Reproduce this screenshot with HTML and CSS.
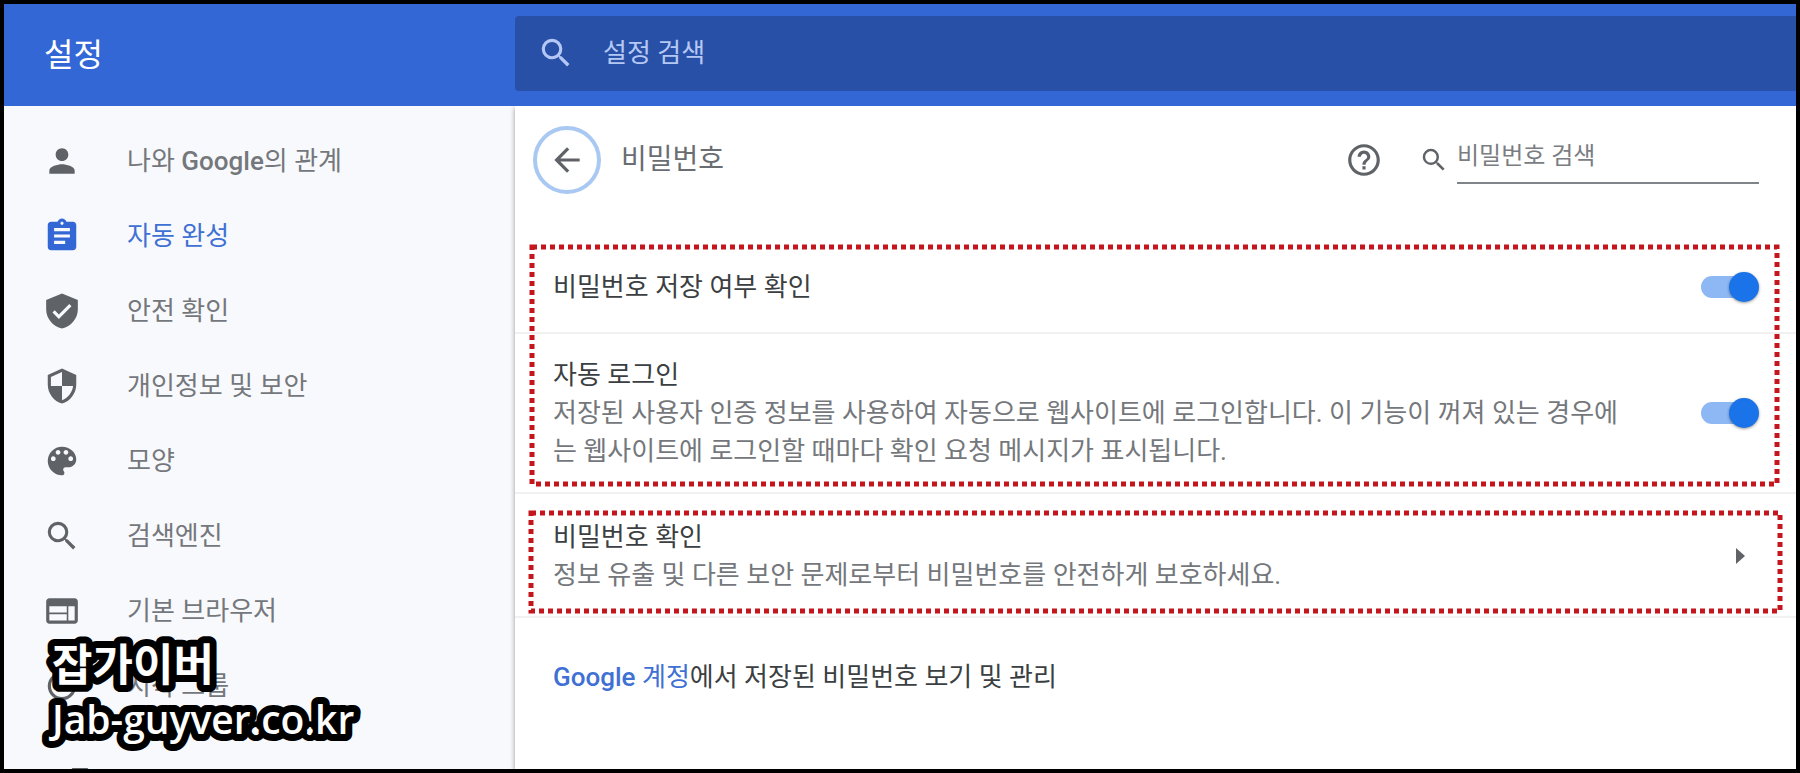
FILE: index.html
```
<!DOCTYPE html>
<html lang="ko">
<head>
  <meta charset="UTF-8" />
  <meta name="viewport" content="width=device-width, initial-scale=1.0"/>
  <title>설정 - 비밀번호</title>
  <link rel="stylesheet" href="styles.css">
</head>
<body>
  <header class="topbar">
    <h1>설정</h1>
    <label class="topbar-search">
      <svg class="icon" viewBox="0 0 24 24"><path d="M15.5 14h-.79l-.28-.27A6.471 6.471 0 0 0 16 9.5 6.5 6.5 0 1 0 9.5 16c1.61 0 3.09-.59 4.23-1.57l.27.28v.79l5 4.99L20.49 19l-4.99-5zm-6 0C7.01 14 5 11.99 5 9.5S7.01 5 9.5 5 14 7.01 14 9.5 11.99 14 9.5 14z"/></svg>
      <input type="text" placeholder="설정 검색" aria-label="설정 검색">
    </label>
  </header>

  <div class="layout">
    <nav class="sidebar">
      <a href="#">
        <svg class="icon" viewBox="0 0 24 24"><path d="M12 12c2.21 0 4-1.79 4-4s-1.79-4-4-4-4 1.79-4 4 1.79 4 4 4zm0 2c-2.67 0-8 1.34-8 4v2h16v-2c0-2.66-5.33-4-8-4z"/></svg>
        <span>나와 <b>Google</b>의 관계</span>
      </a>
      <a href="#" class="active">
        <svg class="icon" viewBox="0 0 24 24"><path d="M19 3h-4.18C14.4 1.84 13.3 1 12 1c-1.3 0-2.4.84-2.82 2H5c-1.1 0-2 .9-2 2v14c0 1.1.9 2 2 2h14c1.1 0 2-.9 2-2V5c0-1.1-.9-2-2-2zm-7 0c.55 0 1 .45 1 1s-.45 1-1 1-1-.45-1-1 .45-1 1-1zm2 14H7v-2h7v2zm3-4H7v-2h10v2zm0-4H7V7h10v2z"/></svg>
        <span>자동 완성</span>
      </a>
      <a href="#">
        <svg class="icon" viewBox="0 0 24 24"><path d="M12 1L2 5v6c0 5.6 4.2 10.700 10 12 5.800-1.300 10-6.400 10-12V5L12 1zm-2 16l-4-4 1.410-1.410L10 14.170l6.590-6.590L18 9l-8 8z"/></svg>
        <span>안전 확인</span>
      </a>
      <a href="#">
        <svg class="icon" viewBox="0 0 24 24"><path d="M12 1L3 5v6c0 5.55 3.84 10.74 9 12 5.16-1.26 9-6.45 9-12V5l-9-4zm0 10.990h7c-.53 4.120-3.280 7.790-7 8.940V12H5V6.300l7-3.110v8.800z"/></svg>
        <span>개인정보 및 보안</span>
      </a>
      <a href="#">
        <svg class="icon" viewBox="0 0 24 24"><path d="M12 3c-4.970 0-9 4.030-9 9s4.030 9 9 9c.83 0 1.500-.67 1.500-1.500 0-.39-.15-.74-.39-1.010-.23-.26-.38-.61-.38-.99 0-.83.67-1.500 1.500-1.500H16c2.760 0 5-2.240 5-5 0-4.420-4.030-8-9-8zm-5.500 9c-.83 0-1.500-.67-1.500-1.500S5.670 9 6.500 9 8 9.670 8 10.500 7.330 12 6.500 12zm3-4C8.670 8 8 7.330 8 6.500S8.670 5 9.500 5s1.500.67 1.500 1.500S10.330 8 9.500 8zm5 0c-.83 0-1.500-.67-1.500-1.500S13.670 5 14.500 5s1.500.67 1.500 1.500S15.330 8 14.500 8zm3 4c-.83 0-1.500-.67-1.500-1.500S16.670 9 17.500 9s1.500.67 1.500 1.500-.67 1.500-1.500 1.500z"/></svg>
        <span>모양</span>
      </a>
      <a href="#">
        <svg class="icon" viewBox="0 0 24 24"><path d="M15.5 14h-.79l-.28-.27A6.471 6.471 0 0 0 16 9.5 6.5 6.5 0 1 0 9.5 16c1.61 0 3.09-.59 4.23-1.57l.27.28v.79l5 4.99L20.49 19l-4.99-5zm-6 0C7.01 14 5 11.99 5 9.5S7.01 5 9.5 5 14 7.01 14 9.5 11.99 14 9.5 14z"/></svg>
        <span>검색엔진</span>
      </a>
      <a href="#">
        <svg class="icon" viewBox="0 0 24 24"><path d="M20 4H4c-1.100 0-1.990.9-1.990 2L2 18c0 1.100.9 2 2 2h16c1.100 0 2-.9 2-2V6c0-1.100-.9-2-2-2zm-5 14H4v-4h11v4zm0-5H4V9h11v4zm5 5h-4V9h4v9z"/></svg>
        <span>기본 브라우저</span>
      </a>
      <a href="#">
        <svg class="icon" viewBox="0 0 24 24"><path d="M13 3h-2v10h2V3zm4.830 2.170l-1.420 1.420C17.990 7.860 19 9.810 19 12c0 3.870-3.130 7-7 7s-7-3.130-7-7c0-2.190 1.010-4.140 2.580-5.420L6.170 5.170C4.230 6.820 3 9.260 3 12c0 4.970 4.030 9 9 9s9-4.030 9-9c0-2.740-1.230-5.180-3.170-6.830z"/></svg>
        <span>시작 그룹</span>
      </a>
      <button type="button" class="advanced">고급</button>
    </nav>

    <main class="content">
      <div class="page-header">
        <button type="button" class="back" aria-label="뒤로">
          <svg class="icon" viewBox="0 0 24 24"><path d="M20 11H7.830l5.590-5.590L12 4l-8 8 8 8 1.410-1.410L7.830 13H20v-2z"/></svg>
        </button>
        <h2>비밀번호</h2>
        <button type="button" class="help" aria-label="도움말">
          <svg class="icon" viewBox="0 0 24 24"><path d="M11 18h2v-2h-2v2zm1-16C6.480 2 2 6.480 2 12s4.480 10 10 10 10-4.480 10-10S17.520 2 12 2zm0 18c-4.410 0-8-3.590-8-8s3.590-8 8-8 8 3.590 8 8-3.590 8-8 8zm0-14c-2.210 0-4 1.790-4 4h2c0-1.100.9-2 2-2s2 .9 2 2c0 2-3 1.750-3 5h2c0-2.250 3-2.500 3-5 0-2.210-1.790-4-4-4z"/></svg>
        </button>
        <label class="page-search">
          <svg class="icon small" viewBox="0 0 24 24"><path d="M15.5 14h-.79l-.28-.27A6.471 6.471 0 0 0 16 9.5 6.5 6.5 0 1 0 9.5 16c1.61 0 3.09-.59 4.23-1.57l.27.28v.79l5 4.99L20.49 19l-4.99-5zm-6 0C7.01 14 5 11.99 5 9.5S7.01 5 9.5 5 14 7.01 14 9.5 11.99 14 9.5 14z"/></svg>
          <input type="text" placeholder="비밀번호 검색" aria-label="비밀번호 검색">
        </label>
      </div>

      <section class="group">
        <div class="row">
          <label class="row-text" for="save">비밀번호 저장 여부 확인</label>
          <input type="checkbox" class="toggle" id="save" checked>
        </div>
        <div class="row">
          <div class="row-text">
            <label for="auto">자동 로그인</label>
            <p>저장된 사용자 인증 정보를 사용하여 자동으로 웹사이트에 로그인합니다. 이 기능이 꺼져 있는 경우에는 웹사이트에 로그인할 때마다 확인 요청 메시지가 표시됩니다.</p>
          </div>
          <input type="checkbox" class="toggle" id="auto" checked>
        </div>
        <div class="marker"><svg><rect width="100%" height="100%"/></svg></div>
      </section>

      <section class="group check">
        <div class="row">
          <div class="row-text">
            <span>비밀번호 확인</span>
            <p>정보 유출 및 다른 보안 문제로부터 비밀번호를 안전하게 보호하세요.</p>
          </div>
          <button type="button" class="arrow" aria-label="비밀번호 확인">
            <svg viewBox="0 0 9 16"><path d="M0 0l9 8-9 8z"/></svg>
          </button>
        </div>
        <div class="marker"><svg><rect width="100%" height="100%"/></svg></div>
      </section>

      <p class="account"><a href="#"><b>Google</b> 계정</a>에서 저장된 비밀번호 보기 및 관리</p>
    </main>
  </div>

  <svg class="watermark">
    <text y="44">잡가이버</text>
    <text y="97" class="site">Jab-guyver.co.kr</text>
  </svg>
</body>
</html>
```
FILE: styles.css
```
* {
  box-sizing: border-box;
}

body {
  margin: 0;
  height: 100vh;
  display: flex;
  flex-direction: column;
  overflow: hidden;
  position: relative;
  border: 4px solid #000;
  background-color: #fff;
  font-family: Roboto, 'Noto Sans CJK KR', sans-serif;
  font-size: 26px;
  line-height: 38px;
  color: #3c3f42;
}

h1, h2, p {
  margin: 0;
  font-weight: normal;
}

a {
  color: #3f70d4;
  text-decoration: none;
}

b {
  font-weight: 500;
}

button,
input {
  font: inherit;
  color: inherit;
  border: none;
  background: none;
  padding: 0;
  margin: 0;
  outline: none;
}

button {
  cursor: pointer;
}

.icon {
  width: 38px;
  height: 38px;
  flex: none;
  display: block;
  fill: #5f6368;
}

.icon.small {
  width: 30px;
  height: 30px;
}

/* Barra superior */
.topbar {
  flex: none;
  display: flex;
  align-items: center;
  height: 102px;
  background-color: #3367d6;
}

.topbar h1 {
  width: 511px;
  flex: none;
  padding-left: 40px;
  font-size: 32px;
  color: #fff;
}

.topbar-search {
  flex: 1;
  display: flex;
  align-items: center;
  gap: 28px;
  height: 75px;
  margin-bottom: 4px;
  padding-left: 22px;
  background-color: #2850a7;
  border-radius: 4px 0 0 4px;
}

.topbar-search .icon {
  fill: #b5c8f5;
}

.topbar-search input {
  flex: 1;
  color: #fff;
}

.topbar-search input::placeholder {
  color: #b5c8f5;
  opacity: 1;
}

.layout {
  flex: 1;
  min-height: 0;
  display: flex;
}

/* Menu lateral */
.sidebar {
  width: 511px;
  flex: none;
  padding-top: 17px;
  overflow: hidden;
  background-color: #f8f9fc;
}

.sidebar a {
  display: flex;
  align-items: center;
  gap: 46px;
  height: 75px;
  padding-left: 39px;
  color: #74777b;
}

.sidebar a.active {
  color: #3f70d4;
}

.sidebar a.active .icon {
  fill: #3367d6;
}

.advanced {
  margin: 38px 0 0 40px;
  color: #5f6368;
}

/* Contenido */
.content {
  flex: 1;
  min-width: 0;
  background-color: #fff;
  box-shadow: 0 2px 5px rgba(0,0,0,0.4);
  clip-path: inset(0 0 0 -8px);
}

.page-header {
  display: flex;
  align-items: center;
  height: 136px;
  padding: 0 37px 28px 18px;
}

.back {
  display: flex;
  align-items: center;
  justify-content: center;
  width: 68px;
  height: 68px;
  border: 4px solid #a9c8f2;
  border-radius: 50%;
}

.page-header h2 {
  flex: 1;
  padding-left: 20px;
  font-size: 28px;
  color: #6a6d71;
}

.help {
  margin-right: 36px;
}

.page-search {
  display: flex;
  align-items: center;
  gap: 8px;
}

.page-search input {
  width: 302px;
  height: 48px;
  padding-bottom: 6px;
  border-bottom: 2px solid #808387;
  font-size: 24px;
}

.page-search input::placeholder {
  color: #7a7d81;
  opacity: 1;
}

.group {
  position: relative;
}

.row {
  display: flex;
  align-items: center;
  justify-content: space-between;
  gap: 74px;
  min-height: 92px;
  padding: 22px 37px 22px 38px;
  border-bottom: 2px solid #f1f1f2;
}

.check .row {
  padding-top: 24px;
}

.row-text {
  flex: 1;
}

.row-text p {
  color: #74777b;
}

.toggle {
  appearance: none;
  flex: none;
  position: relative;
  width: 58px;
  height: 30px;
  cursor: pointer;
}

.toggle::before {
  content: '';
  position: absolute;
  top: 4px;
  left: 0;
  width: 52px;
  height: 22px;
  border-radius: 11px;
  background-color: #8db8f4;
}

.toggle::after {
  content: '';
  position: absolute;
  top: 0;
  right: 0;
  width: 30px;
  height: 30px;
  border-radius: 50%;
  background-color: #1a73e8;
  box-shadow: 0 1px 3px rgba(0,0,0,0.4);
}

.arrow {
  padding: 0 14px;
}

.arrow svg {
  display: block;
  width: 9px;
  height: 16px;
  fill: #5f6368;
}

/* Recuadro punteado rojo */
.marker {
  position: absolute;
  inset: 5px 19px 10px 17px;
  pointer-events: none;
}

.check .marker {
  inset: 19px 16px 7px 16px;
}

.marker svg {
  display: block;
  width: 100%;
  height: 100%;
  overflow: visible;
}

.marker rect {
  fill: none;
  stroke: #c4161c;
  stroke-width: 5px;
  stroke-dasharray: 5 4;
}

.account {
  padding: 40px 38px;
}

/* Marca de agua */
.watermark {
  position: absolute;
  left: 48px;
  bottom: 12px;
  width: 320px;
  height: 120px;
  overflow: visible;
  pointer-events: none;
}

.watermark text {
  font-size: 44px;
  font-weight: bold;
  fill: #fff;
  stroke: #000;
  stroke-width: 14px;
  stroke-linejoin: round;
  paint-order: stroke;
}

.watermark .site {
  font-family: 'Open Sans', sans-serif;
  font-size: 39px;
  font-weight: 600;
}
```
